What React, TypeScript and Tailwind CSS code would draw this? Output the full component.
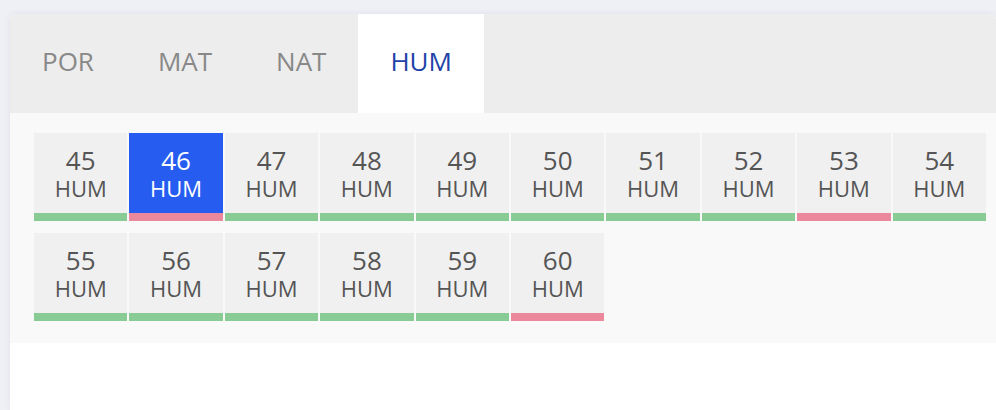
import React from "react";

type Item = { n: number; ok: boolean };

const tabs = ["POR", "MAT", "NAT", "HUM"];

const items: Item[] = [
  { n: 45, ok: true },
  { n: 46, ok: false },
  { n: 47, ok: true },
  { n: 48, ok: true },
  { n: 49, ok: true },
  { n: 50, ok: true },
  { n: 51, ok: true },
  { n: 52, ok: true },
  { n: 53, ok: false },
  { n: 54, ok: true },
  { n: 55, ok: true },
  { n: 56, ok: true },
  { n: 57, ok: true },
  { n: 58, ok: true },
  { n: 59, ok: true },
  { n: 60, ok: false },
];

function QuestionTile({ item, selected }: { item: Item; selected: boolean }) {
  return (
    <div className="flex flex-col">
      <div
        className={`h-20 flex flex-col items-center pt-3 ${
          selected ? "bg-[#265df0] text-white" : "bg-[#f0f0f0] text-[#555555]"
        }`}
      >
        <span className="text-[26px] leading-[30px]">{item.n}</span>
        <span className="text-[22px] leading-[27px]">HUM</span>
      </div>
      {/* status bar under each question */}
      <div className={`h-2 ${item.ok ? "bg-[#88cb95]" : "bg-[#ec889c]"}`} />
    </div>
  );
}

export default function App() {
  const active = "HUM";

  return (
    <div
      className="w-[996px] h-[410px] overflow-hidden bg-[#eff0f5] pt-[14px] pl-[10px]"
      style={{ fontFamily: '"Open Sans", sans-serif' }}
    >
      <div className="w-[986px] h-[396px] bg-white rounded-t-md overflow-hidden shadow-[0_0_6px_rgba(40,50,90,0.08)]">
        {/* Tabs */}
        <div className="flex h-[99px] bg-[#ededed]">
          {tabs.map((t) => (
            <div
              key={t}
              className={`px-8 flex items-center text-[26px] pb-[4px] ${
                t === active ? "bg-white text-[#2242a8]" : "text-[#888888]"
              }`}
            >
              {t}
            </div>
          ))}
        </div>

        {/* Question grid */}
        <div className="bg-[#f9f9f9] pl-6 pr-[10px] pt-5 pb-[22px]">
          <div className="grid grid-cols-10 gap-x-[2px] gap-y-3">
            {items.map((it) => (
              <QuestionTile key={it.n} item={it} selected={it.n === 46} />
            ))}
          </div>
        </div>
      </div>
    </div>
  );
}
